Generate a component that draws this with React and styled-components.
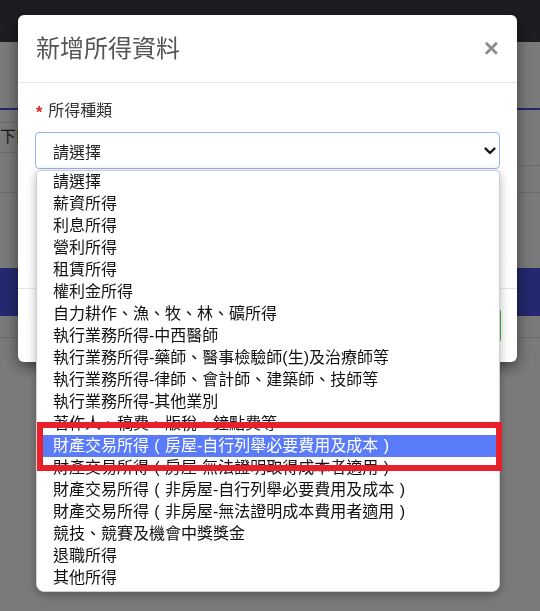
import React from "react";
import styled, { createGlobalStyle } from "styled-components";

const GlobalStyle = createGlobalStyle`
  html, body {
    margin: 0;
    padding: 0;
    height: 100%;
  }
  body {
    background: #fff;
    font-family: "Liberation Sans", "Noto Sans CJK TC", sans-serif;
    color: #333;
    overflow: hidden;
  }
`;

// page behind the backdrop
const Page = styled.div`
  min-height: 611px;
`;

const NavBar = styled.div`
  height: 42px;
  background: #3b3d46;
`;

const Content = styled.div`
  padding-top: 66px;
`;

const TabRule = styled.div`
  height: 2px;
  background: #4b55e6;
`;

const ToolRow = styled.div`
  display: flex;
  height: 83px;
  box-sizing: border-box;
  border-bottom: 1px solid #ddd;
`;

const LeftCell = styled.div`
  width: 90px;
  height: 31px;
  margin-top: 12px;
  box-sizing: border-box;
  border-top: 1px solid #ddd;
  border-bottom: 1px solid #ddd;
  font-size: 16px;
  line-height: 28px;
  color: #333;
  white-space: nowrap;
`;

const RightCell = styled.div`
  flex: 1;
  height: 56px;
  box-sizing: border-box;
  border-bottom: 1px solid #ddd;
`;

const BlueHeader = styled.div`
  height: 48px;
  margin-top: 75px;
  background: #4b55e6;
`;

const TableRow = styled.div`
  height: 21px;
  border-bottom: 1px solid #ddd;
`;

// modal
const Backdrop = styled.div`
  position: fixed;
  inset: 0;
  background: rgba(0, 0, 0, 0.52);
`;

const Dialog = styled.div`
  width: 499px;
  margin: 15px 0 0 18px;
  background: #fff;
  border-radius: 6px;
  box-shadow: 0 5px 15px rgba(0, 0, 0, 0.5);
`;

const Header = styled.div`
  display: flex;
  align-items: center;
  justify-content: space-between;
  height: 68px;
  box-sizing: border-box;
  padding: 0 18px 0 18px;
  border-bottom: 1px solid #e5e5e5;
`;

const Title = styled.h4`
  margin: 0;
  font-size: 24px;
  font-weight: 400;
  line-height: 1;
  color: #555;
`;

const Close = styled.button`
  margin-top: -2px;
  padding: 0;
  border: 0;
  background: none;
  font: 700 26px/1 "Liberation Sans", sans-serif;
  color: #000;
  opacity: 0.45;
  cursor: pointer;
`;

const Body = styled.div`
  height: 205px;
  box-sizing: border-box;
  padding: 17px 17px 0;
`;

const Label = styled.label`
  display: flex;
  align-items: flex-start;
  height: 22px;
  margin-bottom: 10px;
  font-size: 16px;
  line-height: 22px;
  color: #333;
`;

const Star = styled.span`
  margin: 5px 6px 0 1px;
  font: 700 16px/16px "Liberation Sans", sans-serif;
  color: #e31b1b;
`;

const SelectWrap = styled.div`
  position: relative;
`;

const SelectBox = styled.div`
  display: flex;
  align-items: center;
  justify-content: space-between;
  height: 37px;
  box-sizing: border-box;
  padding: 0 3px 0 17px;
  border: 1px solid #91b5fa;
  border-radius: 4px;
  font-size: 16px;
  color: #222;
`;

const Dropdown = styled.ul`
  position: absolute;
  top: calc(100% + 1px);
  left: 1px;
  width: 464px;
  box-sizing: border-box;
  margin: 0;
  padding: 0 0 2px;
  list-style: none;
  background: #fff;
  border: 1px solid #cfcfcf;
  border-radius: 4px 4px 8px 8px;
  box-shadow: 0 3px 10px rgba(0, 0, 0, 0.3);
  z-index: 2;
`;

const Option = styled.li`
  height: 22px;
  padding-left: 16px;
  font-size: 16px;
  line-height: 22px;
  white-space: nowrap;
  color: ${p => (p.$active ? "#fff" : "#111")};
  background: ${p => (p.$active ? "#5b7cfa" : "transparent")};
`;

// full-width bracket, drawn centred in its em box
const Paren = styled.span`
  display: inline-block;
  width: 1em;
  text-align: center;
`;

const Highlight = styled.div`
  position: absolute;
  top: 251px;
  left: 0;
  width: 465px;
  height: 49px;
  box-sizing: border-box;
  border: 6px solid #e8202a;
  pointer-events: none;
`;

const Footer = styled.div`
  display: flex;
  justify-content: flex-end;
  padding: 19px 16px;
  border-top: 1px solid #e5e5e5;
`;

const SaveButton = styled.button`
  height: 35px;
  padding: 0 14px;
  border: 1px solid #4cae4c;
  border-radius: 4px;
  background: #5cb85c;
  color: #fff;
  font-size: 14px;
`;

const options = [
  "請選擇",
  "薪資所得",
  "利息所得",
  "營利所得",
  "租賃所得",
  "權利金所得",
  "自力耕作、漁、牧、林、礦所得",
  "執行業務所得-中西醫師",
  "執行業務所得-藥師、醫事檢驗師(生)及治療師等",
  "執行業務所得-律師、會計師、建築師、技師等",
  "執行業務所得-其他業別",
  "著作人、稿費、版稅、鐘點費等",
  "財產交易所得（房屋-自行列舉必要費用及成本）",
  "財產交易所得（房屋-無法證明取得成本者適用）",
  "財產交易所得（非房屋-自行列舉必要費用及成本）",
  "財產交易所得（非房屋-無法證明成本費用者適用）",
  "競技、競賽及機會中獎獎金",
  "退職所得",
  "其他所得",
];

const ACTIVE = 12;

// split full-width brackets out so they sit centred like the original font
const renderLabel = text =>
  text.split(/([（）])/).map((part, i) =>
    part === "（" ? <Paren key={i}>(</Paren> : part === "）" ? <Paren key={i}>)</Paren> : part
  );

function Chevron() {
  return (
    <svg width="12" height="8" viewBox="0 0 12 8">
      <path d="M1.6 1.6 L6 6 L10.4 1.6" fill="none" stroke="#1a1a1a" strokeWidth="2.4" strokeLinecap="round" strokeLinejoin="round" />
    </svg>
  );
}

export default function App() {
  return (
    <>
      <GlobalStyle />
      <Page>
        <NavBar />
        <Content>
          <TabRule />
          <ToolRow>
            <LeftCell>下載</LeftCell>
            <RightCell />
          </ToolRow>
          <BlueHeader />
          <TableRow />
        </Content>
      </Page>

      <Backdrop>
        <Dialog>
          <Header>
            <Title>新增所得資料</Title>
            <Close>×</Close>
          </Header>
          <Body>
            <Label>
              <Star>*</Star>所得種類
            </Label>
            <SelectWrap>
              <SelectBox>
                <span>請選擇</span>
                <Chevron />
              </SelectBox>
              <Dropdown>
                {options.map((o, i) => (
                  <Option key={o} $active={i === ACTIVE}>{renderLabel(o)}</Option>
                ))}
                <Highlight />
              </Dropdown>
            </SelectWrap>
          </Body>
          <Footer>
            <SaveButton>儲存</SaveButton>
          </Footer>
        </Dialog>
      </Backdrop>
    </>
  );
}
